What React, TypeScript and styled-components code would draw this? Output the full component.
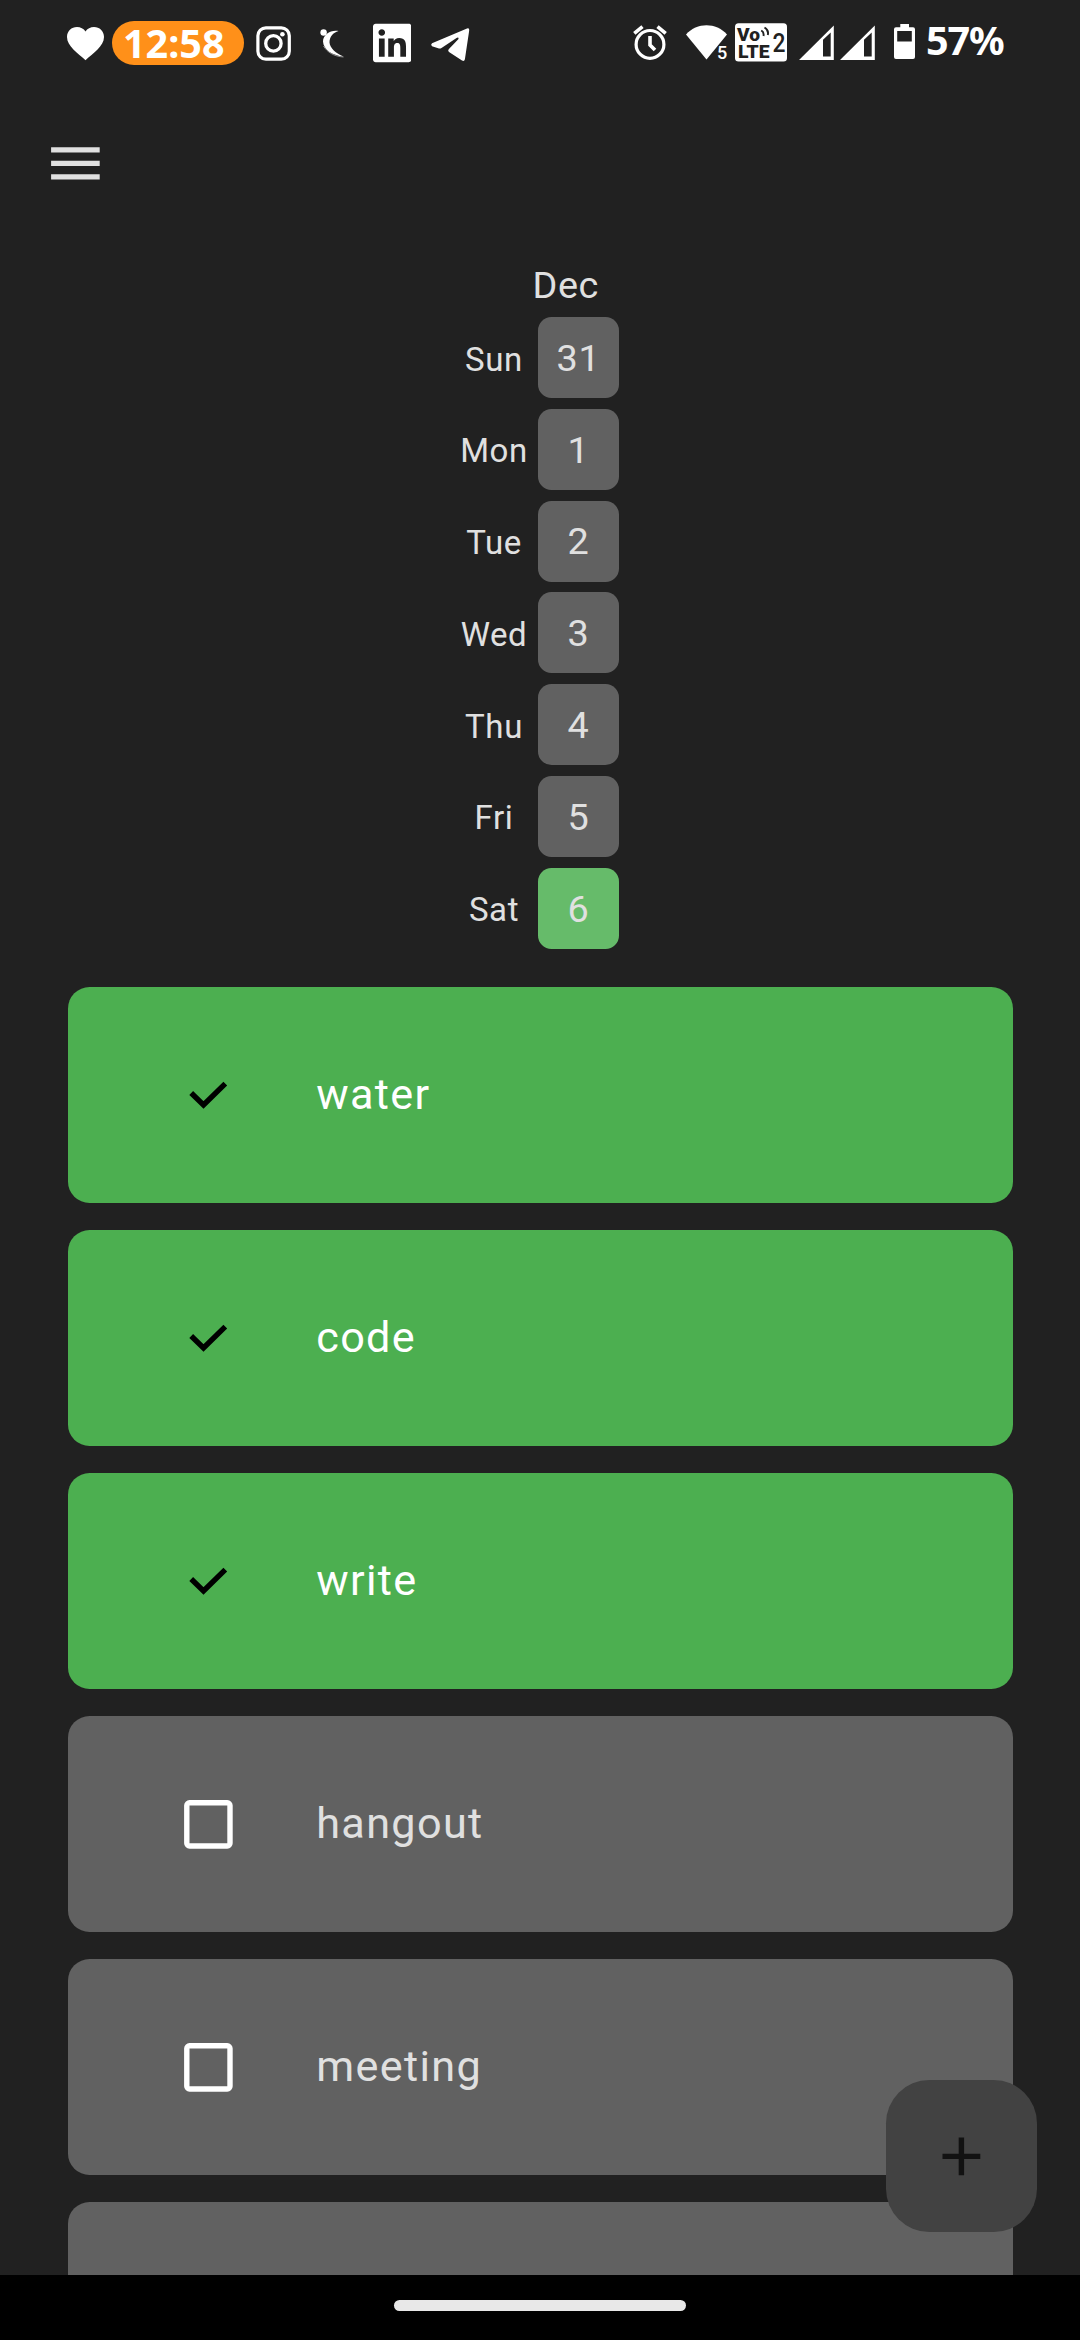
import React from "react";
import styled, { createGlobalStyle } from "styled-components";
import { FaLinkedin } from "react-icons/fa";

const GlobalStyle = createGlobalStyle`
  * { box-sizing: border-box; }
  body { margin: 0; background: #212121; }
`;

const Screen = styled.div`
  position: relative;
  display: flex;
  flex-direction: column;
  width: 1080px;
  height: 2340px;
  overflow: hidden;
  background: #212121;
  color: #e0e0e0;
  font-family: Roboto, "Liberation Sans", sans-serif;
`;

const StatusBar = styled.header`
  display: flex;
  justify-content: space-between;
  flex: none;
  height: 86px;
  padding: 0 77px 0 67px;
  color: #fff;
`;

const StatusGroup = styled.div`
  display: flex;
  align-items: flex-start;
`;

const Glyph = styled.svg<{ $gap?: number }>`
  display: block;
  flex: none;
  height: 86px;
  margin-left: ${(p) => p.$gap ?? 0}px;
  overflow: visible;
`;

const Clock = styled.div`
  width: 132px;
  height: 44px;
  margin: 21px 0 0 8px;
  padding-left: 11px;
  border-radius: 22px;
  background: #ff9019;
  font: 700 39.5px/44px "Noto Sans", sans-serif;
`;

const LinkedIn = styled(FaLinkedin)`
  width: 38.5px;
  height: 44px;
  margin: 21px 0 0 26.5px;
`;

const Battery = styled.div`
  width: 77px;
  margin: 18px 0 0 11px;
  font: 700 39.5px/44px "Noto Sans", sans-serif;
  letter-spacing: -1.1px;
  white-space: nowrap;
`;

const AppBar = styled.div`
  display: flex;
  align-items: center;
  flex: none;
  height: 155px;
  padding: 0 43.2px;
`;

const MenuButton = styled.button`
  display: flex;
  padding: 0;
  border: 0;
  background: none;
  color: #e0e0e0;
`;

const Content = styled.main`
  flex: 1;
  min-height: 0;
  overflow: hidden;
  display: flex;
  flex-direction: column;
`;

const Calendar = styled.section`
  display: flex;
  flex-direction: column;
  flex: none;
  width: 159px;
  margin-left: 460px;
`;

const Month = styled.div`
  height: 76px;
  padding: 22px 0 0 72.5px;
  font-size: 37.8px;
  line-height: 44px;
  letter-spacing: 0.6px;
`;

const DayList = styled.div`
  display: flex;
  flex-direction: column;
  gap: 10.8px;
`;

const DayRow = styled.div`
  display: flex;
  align-items: center;
  height: 81px;
`;

const DayName = styled.div`
  width: 68px;
  margin-right: 10px;
  padding-top: 4px;
  text-align: center;
  font-size: 33px;
  line-height: 40px;
  letter-spacing: 0.6px;
`;

const DayCell = styled.div<{ $active: boolean }>`
  display: flex;
  align-items: center;
  justify-content: center;
  width: 81px;
  height: 81px;
  padding-top: 0.8px;
  border-radius: 13.5px;
  background: ${(p) => (p.$active ? "#66bb6a" : "#616161")};
  font-size: 37.8px;
  letter-spacing: 0.7px;
`;

const HabitList = styled.section`
  display: flex;
  flex-direction: column;
  flex: none;
  gap: 27px;
  padding: 38.4px 67.5px 0;
`;

const HabitCard = styled.div<{ $done: boolean }>`
  display: flex;
  align-items: center;
  flex: none;
  height: 216px;
  padding-left: 108px;
  border-radius: 21.6px;
  background: ${(p) => (p.$done ? "#4caf50" : "#616161")};
  color: ${(p) => (p.$done ? "#fff" : "#e0e0e0")};
`;

const HabitName = styled.span`
  margin-left: 75.9px;
  font-size: 43.2px;
  line-height: 64.8px;
  letter-spacing: 1.35px;
`;

const AddButton = styled.button`
  position: absolute;
  right: 43px;
  bottom: 108.5px;
  display: flex;
  align-items: center;
  justify-content: center;
  width: 151.2px;
  height: 151.2px;
  padding: 0;
  border: 0;
  border-radius: 43.2px;
  background: #424242;
  color: #121212;
`;

const NavigationBar = styled.footer`
  display: flex;
  justify-content: center;
  flex: none;
  height: 65px;
  padding-top: 25px;
  background: #000;
`;

const HomePill = styled.div`
  width: 292px;
  height: 11px;
  border-radius: 6px;
  background: #e8e8e8;
`;

const DAYS = [
  { name: "Sun", date: 31 },
  { name: "Mon", date: 1 },
  { name: "Tue", date: 2 },
  { name: "Wed", date: 3 },
  { name: "Thu", date: 4 },
  { name: "Fri", date: 5 },
  { name: "Sat", date: 6, active: true },
];

const HABITS = [
  { name: "water", done: true },
  { name: "code", done: true },
  { name: "write", done: true },
  { name: "hangout", done: false },
  { name: "meeting", done: false },
  { name: "", done: false },
];

const Heart = () => (
  <Glyph width={37} viewBox="0 0 37 86">
    <path
      fill="#fff"
      d="M18.5 60.3C11 53 0 46.500 0 37C0 31 4.500 27 10 27C13.500 27 16.700 28.700 18.500 31.500C20.300 28.700 23.500 27 27 27C32.500 27 37 31 37 37C37 46.500 26 53 18.500 60.300Z"
    />
  </Glyph>
);

const Instagram = () => (
  <Glyph $gap={12} width={35} viewBox="0 0 35 86" fill="none" stroke="#fff">
    <rect x="1.9" y="27.800" width="31.400" height="31.400" rx="8" strokeWidth="3.200" />
    <circle cx="17.400" cy="43.400" r="7.700" strokeWidth="3.300" />
    <circle cx="26.400" cy="34.300" r="2.300" fill="#fff" stroke="none" />
  </Glyph>
);

const Runner = () => (
  <Glyph $gap={29} width={26} viewBox="320 0 26 86" fill="#fff">
    <circle cx="323.600" cy="32.500" r="3.200" />
    <path d="M338.500 31C331 29.500 323 34.500 323 41.500C323.500 49.500 332 55.500 343.500 56.500C336 53.500 329.800 48 329.500 42.500C329.500 37 333 32.500 338.500 31Z" />
    <path d="M323.500 46C327 52 334 56.500 343.500 57" fill="none" stroke="#bbb" strokeWidth="0.700" />
  </Glyph>
);

const Telegram = () => (
  <Glyph $gap={20} width={38} viewBox="431 0 38 86" fill="#fff">
    <path d="M432 43.200L467 28.500Q469.600 27.800 469.200 30.500L464.900 59.300Q464.300 61.800 462 60.500L449 52Q447.500 50.800 448.700 49.300L458.500 39Q458.900 36.800 456.500 38L441.500 48Q440 48.900 438.200 48.300L432 46.300Q430.300 44.700 432 43.200Z" />
  </Glyph>
);

const Alarm = () => (
  <Glyph width={34} viewBox="632 0 34 86" fill="none" stroke="#fff">
    <circle cx="649" cy="44.400" r="13.900" strokeWidth="3.200" />
    <path d="M649 36V45L654 50" strokeWidth="3.600" />
    <path d="M633.300 33.400L641.500 26.700M656.500 26.700L664.700 33.400" strokeWidth="3.600" />
  </Glyph>
);

const Wifi = () => (
  <Glyph $gap={18} width={42} viewBox="684 0 42 86" fill="#fff">
    <path d="M705.500 59.500L685 34.500C696 22.200 715 22.200 726 34.500Z" />
    <text x="716" y="59" fontFamily="Roboto, sans-serif" fontWeight="500" fontSize="18">
      5
    </text>
  </Glyph>
);

const VoLte = () => (
  <Glyph $gap={8.5} width={52} viewBox="734.500 0 52 86" fontFamily="Roboto, sans-serif" fontWeight="900" fill="#212121">
    <rect x="734.500" y="23.300" width="52" height="38.300" rx="3.500" fill="#fff" />
    <text x="736.500" y="40.500" fontSize="19" textLength="23" lengthAdjust="spacingAndGlyphs">
      Vo
    </text>
    <text x="737.500" y="57.500" fontSize="19" textLength="31.500" lengthAdjust="spacingAndGlyphs">
      LTE
    </text>
    <text x="772" y="52" fontSize="26" fontWeight="500" textLength="13" lengthAdjust="spacingAndGlyphs">
      2
    </text>
    <path d="M760.700 30.500Q763.700 32 763 36M764 27.500Q768.500 30 767.300 35" fill="none" stroke="#212121" strokeWidth="1.900" />
  </Glyph>
);

const Signal = ({ gap }: { gap: number }) => (
  <Glyph $gap={gap} width={35} viewBox="0 0 35 86" fill="#fff">
    <path fillRule="evenodd" d="M0 60L34.800 25.400V60ZM24 39.800V56.500H31.700V32.500Z" />
  </Glyph>
);

const BatteryLevel = () => (
  <Glyph $gap={19} width={21} viewBox="0 0 21 86" fill="#fff">
    <path
      fillRule="evenodd"
      d="M6.300 24H15V27.300H19Q21 27.300 21 29.300V57Q21 59 19 59H2Q0 59 0 57V29.300Q0 27.300 2 27.300H6.300ZM3.200 31V41.500H17.800V31Z"
    />
  </Glyph>
);

const MenuIcon = () => (
  <svg width="64.800" height="64.800" viewBox="0 0 24 24" fill="currentColor">
    <path d="M3 18h18v-2H3v2zm0-5h18v-2H3v2zm0-7v2h18V6H3z" />
  </svg>
);

const AddIcon = () => (
  <svg width="64.800" height="64.800" viewBox="0 0 24 24" fill="currentColor">
    <path d="M19 13h-6v6h-2v-6H5v-2h6V5h2v6h6v2z" />
  </svg>
);

const CheckBox = ({ checked }: { checked: boolean }) => (
  <svg width="64.800" height="64.800" viewBox="0 0 64.800 64.800" fill="none">
    {checked ? (
      <path d="M15.200 30L27.500 41.900L49.300 20.600" stroke="#000" strokeWidth="5.400" />
    ) : (
      <rect x="10.800" y="10.800" width="43.200" height="43.200" rx="2.700" stroke="#fff" strokeWidth="5.400" />
    )}
  </svg>
);

export default function App() {
  return (
    <>
      <GlobalStyle />
      <Screen>
        <StatusBar>
          <StatusGroup>
            <Heart />
            <Clock>12:58</Clock>
            <Instagram />
            <Runner />
            <LinkedIn />
            <Telegram />
          </StatusGroup>
          <StatusGroup>
            <Alarm />
            <Wifi />
            <VoLte />
            <Signal gap={12} />
            <Signal gap={6} />
            <BatteryLevel />
            <Battery>57%</Battery>
          </StatusGroup>
        </StatusBar>
        <AppBar>
          <MenuButton aria-label="Menu">
            <MenuIcon />
          </MenuButton>
        </AppBar>
        <Content>
          <Calendar>
            <Month>Dec</Month>
            <DayList>
              {DAYS.map((day) => (
                <DayRow key={day.name}>
                  <DayName>{day.name}</DayName>
                  <DayCell $active={!!day.active}>{day.date}</DayCell>
                </DayRow>
              ))}
            </DayList>
          </Calendar>
          <HabitList>
            {HABITS.map((habit, index) => (
              <HabitCard key={index} $done={habit.done}>
                <CheckBox checked={habit.done} />
                <HabitName>{habit.name}</HabitName>
              </HabitCard>
            ))}
          </HabitList>
        </Content>
        <AddButton aria-label="Add habit">
          <AddIcon />
        </AddButton>
        <NavigationBar>
          <HomePill />
        </NavigationBar>
      </Screen>
    </>
  );
}
